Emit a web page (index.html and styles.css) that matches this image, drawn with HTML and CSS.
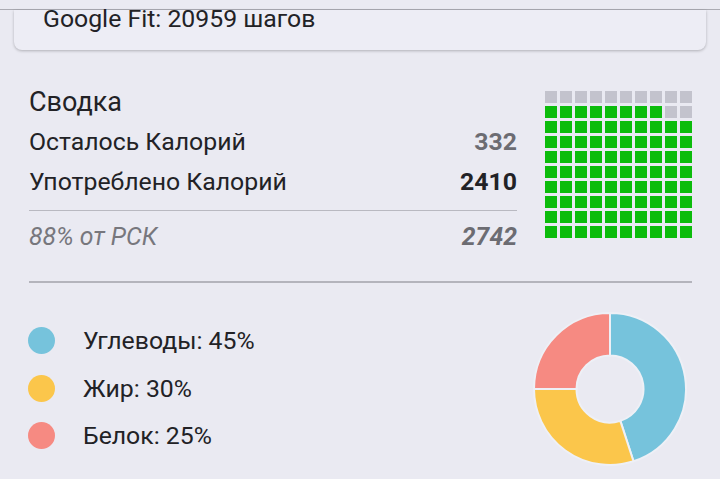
FILE: index.html
```html
<!DOCTYPE html>
<html lang="ru">
<head>
<meta charset="utf-8">
<link rel="stylesheet" href="styles.css">
</head>
<body>
<div class="topbar"></div>
<div class="card">Google Fit: 20959 шагов</div>

<section class="summary">
  <div class="stats">
    <div class="title">Сводка</div>
    <div class="row"><span>Осталось Калорий</span><span class="num muted">332</span></div>
    <div class="row"><span>Употреблено Калорий</span><span class="num strong">2410</span></div>
    <div class="rule"></div>
    <div class="row italic"><span>88% от РСК</span><span class="num muted">2742</span></div>
  </div>
  <div class="waffle">
    <i class="e"></i><i class="e"></i><i class="e"></i><i class="e"></i><i class="e"></i><i class="e"></i><i class="e"></i><i class="e"></i><i class="e"></i><i class="e"></i>
    <i></i><i></i><i></i><i></i><i></i><i></i><i></i><i></i><i class="e"></i><i class="e"></i>
    <i></i><i></i><i></i><i></i><i></i><i></i><i></i><i></i><i></i><i></i>
    <i></i><i></i><i></i><i></i><i></i><i></i><i></i><i></i><i></i><i></i>
    <i></i><i></i><i></i><i></i><i></i><i></i><i></i><i></i><i></i><i></i>
    <i></i><i></i><i></i><i></i><i></i><i></i><i></i><i></i><i></i><i></i>
    <i></i><i></i><i></i><i></i><i></i><i></i><i></i><i></i><i></i><i></i>
    <i></i><i></i><i></i><i></i><i></i><i></i><i></i><i></i><i></i><i></i>
    <i></i><i></i><i></i><i></i><i></i><i></i><i></i><i></i><i></i><i></i>
    <i></i><i></i><i></i><i></i><i></i><i></i><i></i><i></i><i></i><i></i>
  </div>
</section>

<div class="rule2"></div>

<section class="macros">
  <ul class="legend">
    <li><span class="dot carbs"></span>Углеводы: 45%</li>
    <li><span class="dot fat"></span>Жир: 30%</li>
    <li><span class="dot protein"></span>Белок: 25%</li>
  </ul>
  <svg class="donut" width="154" height="154" viewBox="0 0 154 154">
    <path fill="#76c3dc" stroke="#eef0f6" stroke-width="2" d="M77 1 A76 76 0 0 1 100.48 149.28 L87.35 108.86 A33.5 33.5 0 0 0 77 43.5 Z"/>
    <path fill="#fbc64b" stroke="#eef0f6" stroke-width="2" d="M100.48 149.28 A76 76 0 0 1 1 77 L43.5 77 A33.5 33.5 0 0 0 87.35 108.86 Z"/>
    <path fill="#f68a82" stroke="#eef0f6" stroke-width="2" d="M1 77 A76 76 0 0 1 77 1 L77 43.5 A33.5 33.5 0 0 0 43.5 77 Z"/>
  </svg>
</section>
</body>
</html>
```

FILE: styles.css
```css
html, body {
  margin: 0;
  padding: 0;
}
body {
  background: #eaeaf2;
  font-family: Roboto, "Noto Sans", sans-serif;
  color: #222226;
  width: 720px;
  height: 479px;
  overflow: hidden;
}
.topbar {
  height: 9px;
  border-bottom: 1px solid #ababb3;
}
.card {
  margin: 0 14px;
  padding: 0 30px 22px 29px;
  font-size: 24.8px;
  line-height: 18px;
  background: #ededf5;
  border-radius: 0 0 8px 8px;
  box-shadow: 0 1px 3px rgba(0,0,0,0.25);
}
.summary {
  display: flex;
  align-items: flex-start;
  justify-content: space-between;
  padding: 0 28px 0 29px;
  margin-top: 32px;
}
.stats {
  width: 488px;
  font-size: 24.8px;
  line-height: 40px;
}
.title {
  font-size: 27px;
}
.row {
  display: flex;
  justify-content: space-between;
}
.num { font-weight: 700; }
.muted { color: #6c6c72; }
.strong { color: #222226; }
.italic { font-style: italic; color: #77777d; }
.rule {
  height: 1px;
  background: #b9b9c1;
  margin: 8px 0 6px;
}
.waffle {
  margin-top: 9px;
  display: grid;
  grid-template-columns: repeat(10, 12px);
  grid-auto-rows: 12px;
  gap: 3px;
}
.waffle i {
  display: block;
  background: #0cbc0c;
}
.waffle i.e {
  background: #c3c3cd;
}
.rule2 {
  height: 2px;
  background: #b4b4bc;
  margin: 24px 28px 0 29px;
}
.macros {
  display: flex;
  justify-content: space-between;
  align-items: flex-start;
  padding: 0 33px 0 28px;
  margin-top: 29px;
}
.legend {
  list-style: none;
  margin: 5px 0 0;
  padding: 0;
  font-size: 24.8px;
}
.legend li {
  display: flex;
  align-items: center;
  height: 47.5px;
}
.dot {
  width: 27px;
  height: 27px;
  border-radius: 50%;
  margin-right: 28px;
}
.carbs { background: #76c3dc; }
.fat { background: #fbc64b; }
.protein { background: #f68a82; }
.donut { display: block; }
```
